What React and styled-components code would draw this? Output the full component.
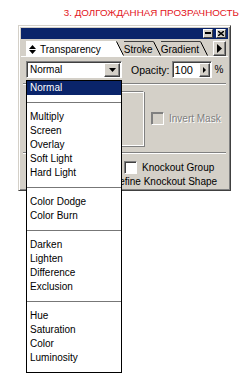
import React from "react";
import styled, { createGlobalStyle } from "styled-components";

const GRAY = "#d4d0c8";
const NAVY = "#0a246a";

const GlobalStyle = createGlobalStyle`
  html, body { margin: 0; padding: 0; background: #fff; }
  body { font-family: "Liberation Sans", Arial, sans-serif; }
`;

const Page = styled.div`
  width: 247px;
  height: 383px;
  overflow: hidden;
`;

const Heading = styled.div`
  padding: 7px 8px 0 0;
  text-align: right;
  color: #e3141b;
  font-size: 9.8px;
  line-height: 12px;
`;

const Panel = styled.div`
  position: relative;
  margin: 6px 0 0 18px;
  width: 213px;
  height: 166px;
  box-sizing: border-box;
  background: ${GRAY};
  border: 1px solid;
  border-color: ${GRAY} #404040 #404040 ${GRAY};
  box-shadow: inset 1px 1px #fff, inset -1px -1px #808080;
  padding: 2px;
  font-size: 10px;
  color: #000;
`;

const TitleBar = styled.div`
  height: 11px;
  background: ${NAVY};
  display: flex;
  justify-content: flex-end;
  align-items: center;
  gap: 3px;
  padding-right: 2px;
`;

const TitleButton = styled.div`
  width: 10px;
  height: 9px;
  box-sizing: border-box;
  background: ${GRAY};
  border: 1px solid;
  border-color: #fff #404040 #404040 #fff;
  display: flex;
  align-items: center;
  justify-content: center;
`;

const Raised = styled.div`
  box-sizing: border-box;
  width: ${(p) => p.$w}px;
  height: ${(p) => p.$h}px;
  background: ${GRAY};
  border: 1px solid;
  border-color: #fff #404040 #404040 #fff;
  box-shadow: inset -1px -1px #808080;
  display: flex;
  align-items: center;
  justify-content: center;
  flex: none;
`;

const TabRow = styled.div`
  height: 17px;
  display: flex;
  align-items: flex-end;
  padding-left: 5px;
`;

const Tab = styled.div`
  height: 15px;
  display: flex;
  align-items: stretch;
`;

const TabBody = styled.div`
  display: flex;
  align-items: center;
  gap: 4px;
  padding: 0 ${(p) => p.$pr}px 0 ${(p) => (p.$active ? 2 : 0)}px;
  border-top: 1px solid ${(p) => (p.$active ? "#fff" : "#404040")};
  border-left: ${(p) => (p.$active ? "1px solid #fff" : "none")};
  background: ${(p) => (p.$active ? "#fff" : GRAY)};
  font-size: 10px;
  line-height: 13px;
  white-space: nowrap;
`;

const Slant = styled.svg`
  display: block;
  flex: none;
`;

const TabMenu = styled(Raised)`
  margin-left: auto;
  margin-right: 2px;
  align-self: center;
  margin-top: 1px;
`;

const Content = styled.div`
  border-top: 1px solid #fff;
  padding: 4px 0 0 5px;
`;

const TopRow = styled.div`
  display: flex;
  align-items: center;
  height: 17px;
`;

const SelectBox = styled.div`
  width: 96px;
  height: 17px;
  box-sizing: border-box;
  background: #fff;
  border: 1px solid;
  border-color: #808080 #fff #fff #808080;
  box-shadow: inset 1px 1px #404040;
  display: flex;
  align-items: center;
  justify-content: space-between;
  padding: 1px 1px 1px 3px;
`;

const Label = styled.span`
  margin-left: 9px;
  margin-right: 2px;
  white-space: nowrap;
  font-size: 10.5px;
`;

const NumberBox = styled(SelectBox)`
  width: 40px;
  padding-left: 2px;
  font-size: 11px;
`;

const Percent = styled.span`
  margin-left: 3px;
`;

const Divider = styled.div`
  height: 1px;
  background: #808080;
  border-bottom: 1px solid #fff;
  margin: ${(p) => p.$m};
`;

const MiddleRow = styled.div`
  display: flex;
  align-items: center;
  height: 67px;
`;

const Thumb = styled.div`
  width: 118px;
  height: 55px;
  box-sizing: border-box;
  border: 1px solid;
  border-color: #808080 #fff #fff #808080;
  box-shadow: inset 1px 1px #fff, 1px 1px #808080;
`;

const Check = styled.div`
  width: 13px;
  height: 13px;
  box-sizing: border-box;
  background: ${(p) => (p.$disabled ? GRAY : "#fff")};
  border: 1px solid;
  border-color: #808080 #fff #fff #808080;
  box-shadow: inset 1px 1px ${(p) => (p.$disabled ? "#808080" : "#404040")};
  flex: none;
`;

const CheckRow = styled.div`
  display: flex;
  align-items: center;
  gap: 5px;
  height: 14px;
  padding-left: ${(p) => p.$pl || 0}px;
  margin: ${(p) => p.$m || 0};
  color: ${(p) => (p.$disabled ? "#808080" : "#000")};
  text-shadow: ${(p) => (p.$disabled ? "1px 1px #fff" : "none")};
  font-size: 10px;
  white-space: nowrap;
`;

const Menu = styled.div`
  position: absolute;
  left: 7px;
  top: 54px;
  width: 96px;
  box-sizing: border-box;
  background: #fff;
  border: 1px solid #000;
  font-size: 10px;
  z-index: 2;
`;

const Group = styled.div`
  padding: ${(p) => (p.$first ? "0 0 7px" : "7px 0")};
  & + & {
    border-top: 1px solid #777;
  }
`;

const Item = styled.div`
  height: 14px;
  line-height: 13px;
  padding-left: 3px;
  background: ${(p) => (p.$selected ? NAVY : "transparent")};
  color: ${(p) => (p.$selected ? "#fff" : "#000")};
`;

const DownArrow = () => (
  <svg width="7" height="4" viewBox="0 0 7 4">
    <path d="M0 0h7L3.5 4z" fill="#000" />
  </svg>
);

const RightArrow = ({ w = 4, h = 7 }) => (
  <svg width={w} height={h} viewBox={`0 0 ${w} ${h}`}>
    <path d={`M0 0L${w} ${h / 2}L0 ${h}z`} fill="#000" />
  </svg>
);

const UpDown = () => (
  <svg width="7" height="9" viewBox="0 0 7 9">
    <path d="M3.5 0L7 4H0z M0 5h7L3.5 9z" fill="#000" />
  </svg>
);

const SlantEdge = ({ active }) => (
  <Slant width="8" height="15" viewBox="0 0 8 15">
    {active && <path d="M0 0L8 15H0z" fill="#fff" />}
    <path d="M0.5 0.5L7.5 14.5" stroke="#000" strokeWidth="1" fill="none" />
  </Slant>
);

const groups = [
  ["Normal"],
  ["Multiply", "Screen", "Overlay", "Soft Light", "Hard Light"],
  ["Color Dodge", "Color Burn"],
  ["Darken", "Lighten", "Difference", "Exclusion"],
  ["Hue", "Saturation", "Color", "Luminosity"],
];

const tabs = [
  { name: "Transparency", active: true, pr: 15 },
  { name: "Stroke", pr: 0 },
  { name: "Gradient", pr: 1 },
];

export default function App() {
  return (
    <Page>
      <GlobalStyle />
      <Heading>3. ДОЛГОЖДАННАЯ ПРОЗРАЧНОСТЬ</Heading>
      <Panel>
        <TitleBar>
          <TitleButton>
            <svg width="6" height="5" viewBox="0 0 6 5">
              <rect x="0" y="1" width="6" height="2" fill="#000" />
            </svg>
          </TitleButton>
          <TitleButton>
            <svg width="6" height="5" viewBox="0 0 6 5">
              <path d="M0 0L6 5M6 0L0 5" stroke="#000" strokeWidth="1.4" />
            </svg>
          </TitleButton>
        </TitleBar>
        <TabRow>
          {tabs.map((t) => (
            <Tab key={t.name}>
              <TabBody $active={t.active} $pr={t.pr}>
                {t.active && <UpDown />}
                {t.name}
              </TabBody>
              <SlantEdge active={t.active} />
            </Tab>
          ))}
          <TabMenu $w={13} $h={15}>
            <RightArrow w={5} h={9} />
          </TabMenu>
        </TabRow>
        <Content>
          <TopRow>
            <SelectBox>
              Normal
              <Raised $w={16} $h={14}>
                <DownArrow />
              </Raised>
            </SelectBox>
            <Label>Opacity:</Label>
            <NumberBox>
              100
              <Raised $w={11} $h={14}>
                <RightArrow w={3} h={6} />
              </Raised>
            </NumberBox>
            <Percent>%</Percent>
          </TopRow>
          <Divider $m="5px 2px 0 -3px" />
          <MiddleRow>
            <Thumb />
            <CheckRow $disabled $m="0 0 0 7px">
              <Check $disabled />
              Invert Mask
            </CheckRow>
          </MiddleRow>
          <Divider $m="0 2px 0 -3px" />
          <CheckRow $pl={98} $m="6px 0 0">
            <Check />
            Knockout Group
          </CheckRow>
          <CheckRow $pl={68}>
            <Check />
            Define Knockout Shape
          </CheckRow>
        </Content>
        <Menu>
          {groups.map((g, i) => (
            <Group key={i} $first={i === 0}>
              {g.map((name) => (
                <Item key={name} $selected={name === "Normal"}>
                  {name}
                </Item>
              ))}
            </Group>
          ))}
        </Menu>
      </Panel>
    </Page>
  );
}
